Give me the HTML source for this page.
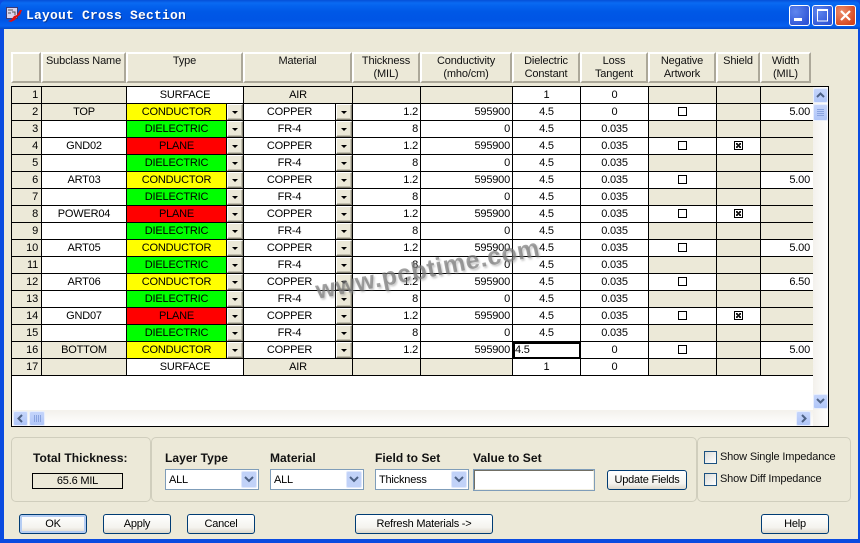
<!DOCTYPE html>
<html><head><meta charset="utf-8"><title>Layout Cross Section</title>
<style>
html,body{margin:0;padding:0;width:860px;height:543px;overflow:hidden;background:#0a4be0}
*{box-sizing:border-box}
body{font:11px/1 "Liberation Sans",sans-serif;color:#000;position:relative}
.a{position:absolute}
#tb{left:0;top:0;width:860px;height:29px;border-radius:7px 7px 0 0;background:linear-gradient(#0550d8 0,#0a6af2 3px,#0462ee 6px,#0058e6 12px,#0055e5 20px,#0560f0 26px,#0348c8 29px)}
#ttl{left:26px;top:9px;font:bold 13px/14px "Liberation Mono",monospace;color:#fff;letter-spacing:.2px;text-shadow:1px 1px 0 #0a3a9a;white-space:pre}
#win{left:4px;top:29px;width:854px;height:510px;background:#ece9d8}
.wb{top:5px;width:21px;height:21px;border:1px solid #fff;border-radius:3px;background:radial-gradient(circle at 30% 30%,#5f86ee,#2f55d6 80%)}
.wb.c{background:radial-gradient(circle at 30% 30%,#ec8d6c,#d5451d 80%)}
.h{top:52px;height:31px;background:#ece9d8;border:2px solid;border-color:#fff #aca899 #aca899 #fff;text-align:center;padding-top:1px;line-height:13px;color:#111;letter-spacing:-.15px}
#g{left:11px;top:86px;width:818px;height:341px;border:1px solid #000;background:#fff;overflow:hidden}
table{border-collapse:separate;border-spacing:0;table-layout:fixed;width:801px;position:absolute;left:0;top:0}
td{height:17px;padding:1px 0 0;border-right:1px solid #000;border-bottom:1px solid #000;text-align:center;font-size:11px;letter-spacing:-.2px;line-height:15px;overflow:hidden;white-space:nowrap;background:#fff}
td.b{background:#ece9d8}
td.n{background:#ece9d8;text-align:right;padding-right:3px}
td.r{text-align:right;padding-right:2px}
td.y{background:#ff0}td.v{background:#0f0}td.p{background:#f00}
td.d{background:#fff;padding:0}
td.l{border-right:0}
td.l.r{padding-right:3px}
td.d i{display:block;width:16px;height:16px;background:#ece9d8;border:1px solid;border-color:#fff #8a8778 #8a8778 #fff;box-shadow:inset -1px -1px 0 #c4c1b0;position:relative}
td.d i:after{content:"";position:absolute;left:4px;top:6px;border:3px solid transparent;border-top:3px solid #000;border-bottom:0}
.ck{display:inline-block;width:9px;height:9px;border:1px solid #000;vertical-align:-1px;background:#fff;position:relative}
.ck.x:after{content:"";position:absolute;left:1px;top:1px;width:5px;height:5px;background:#111;clip-path:polygon(0 0,30% 0,50% 30%,70% 0,100% 0,100% 30%,70% 50%,100% 70%,100% 100%,70% 100%,50% 70%,30% 100%,0 100%,0 70%,30% 50%,0 30%)}
.sb{background:linear-gradient(#c5d5fb,#b0c6f8);border:1px solid #e8eefc;border-radius:2px}
.grp{border:1px solid #d0cebd;border-radius:5px;top:437px;height:65px}
.lb{font-weight:bold;font-size:12px;letter-spacing:.05px;top:452px;line-height:13px;color:#111}
.cb{top:469px;height:21px;width:94px;border:1px solid #7f9db9;background:#fff;padding:4px 0 0 3px;font-size:11px;letter-spacing:-.2px;line-height:13px}
.cb b{position:absolute;right:1px;top:1px;width:16px;height:17px;background:#c1d2f8;border:1px solid #e0e8fc;border-radius:2px}
.btn{top:514px;height:20px;width:68px;border:1px solid #003c74;border-radius:3px;background:linear-gradient(#fff,#f4f3ee 70%,#dcd8cc);text-align:center;font-size:11px;letter-spacing:-.22px;line-height:18px}
.chk{left:704px;width:13px;height:13px;border:1px solid #1c5180;background:linear-gradient(135deg,#dcdcd7,#fff)}
.sl{left:720px;font-size:11px;letter-spacing:-.15px;line-height:14px;color:#111}
#wm{left:316px;top:278px;font:bold 25px/26px "Liberation Sans",sans-serif;letter-spacing:.6px;color:rgba(120,120,120,.68);text-shadow:1px 2px 2px rgba(150,150,150,.5);transform:rotate(-11deg);transform-origin:0 50%;white-space:nowrap}
</style></head>
<body>
<div class="a" id="tb"></div>
<svg class="a" style="left:6px;top:7px" width="17" height="17" viewBox="0 0 17 17"><rect x="0.5" y="0.5" width="11" height="11" fill="#d9d4ec" stroke="#3a3a78"/><path d="M2 3h5M2 6h3M6 5h3v3" stroke="#555" fill="none"/><path d="M2 14l3-1 3-4 3-1 3-5 2 0-2 5-3 2-2 3-4 2z" fill="#e01010"/></svg>
<div class="a" id="ttl">Layout Cross Section</div>
<div class="a wb" style="left:789px"><svg width="19" height="19" style="display:block"><rect x="4" y="12" width="8" height="3" fill="#fff"/></svg></div>
<div class="a wb" style="left:812px"><svg width="19" height="19" style="display:block"><path d="M4 4.5h11M4.500 4v11h10V4" stroke="#fff" stroke-width="1" fill="none"/><rect x="4" y="3" width="11" height="2" fill="#fff"/></svg></div>
<div class="a wb c" style="left:835px"><svg width="19" height="19" style="display:block"><path d="M5 5l9 9M14 5l-9 9" stroke="#fff" stroke-width="2.2"/></svg></div>
<div class="a" id="win"></div>

<div class="a h" style="left:11px;width:30px"></div>
<div class="a h" style="left:41px;width:85px">Subclass Name</div>
<div class="a h" style="left:126px;width:117px">Type</div>
<div class="a h" style="left:243px;width:109px">Material</div>
<div class="a h" style="left:352px;width:68px">Thickness<br>(MIL)</div>
<div class="a h" style="left:420px;width:92px">Conductivity<br>(mho/cm)</div>
<div class="a h" style="left:512px;width:68px">Dielectric<br>Constant</div>
<div class="a h" style="left:580px;width:68px">Loss<br>Tangent</div>
<div class="a h" style="left:648px;width:68px">Negative<br>Artwork</div>
<div class="a h" style="left:716px;width:44px">Shield</div>
<div class="a h" style="left:760px;width:51px">Width<br>(MIL)</div>

<div class="a" id="g">
<table>
<colgroup><col style="width:30px"><col style="width:85px"><col style="width:100px"><col style="width:17px"><col style="width:92px"><col style="width:17px"><col style="width:68px"><col style="width:92px"><col style="width:68px"><col style="width:68px"><col style="width:68px"><col style="width:44px"><col style="width:52px"></colgroup>
<tr><td class="n">1</td><td class="b"></td><td colspan="2">SURFACE</td><td class="b" colspan="2">AIR</td><td class="b"></td><td class="b"></td><td>1</td><td>0</td><td class="b"></td><td class="b"></td><td class="b l"></td></tr>
<tr><td class="n">2</td><td class="b">TOP</td><td class="y">CONDUCTOR</td><td class="d"><i></i></td><td>COPPER</td><td class="d"><i></i></td><td class="r">1.2</td><td class="r">595900</td><td>4.5</td><td>0</td><td><span class="ck"></span></td><td class="b"></td><td class="r l">5.00</td></tr>
<tr><td class="n">3</td><td></td><td class="v">DIELECTRIC</td><td class="d"><i></i></td><td>FR-4</td><td class="d"><i></i></td><td class="r">8</td><td class="r">0</td><td>4.5</td><td>0.035</td><td class="b"></td><td class="b"></td><td class="b l"></td></tr>
<tr><td class="n">4</td><td>GND02</td><td class="p">PLANE</td><td class="d"><i></i></td><td>COPPER</td><td class="d"><i></i></td><td class="r">1.2</td><td class="r">595900</td><td>4.5</td><td>0.035</td><td><span class="ck"></span></td><td><span class="ck x"></span></td><td class="b l"></td></tr>
<tr><td class="n">5</td><td></td><td class="v">DIELECTRIC</td><td class="d"><i></i></td><td>FR-4</td><td class="d"><i></i></td><td class="r">8</td><td class="r">0</td><td>4.5</td><td>0.035</td><td class="b"></td><td class="b"></td><td class="b l"></td></tr>
<tr><td class="n">6</td><td>ART03</td><td class="y">CONDUCTOR</td><td class="d"><i></i></td><td>COPPER</td><td class="d"><i></i></td><td class="r">1.2</td><td class="r">595900</td><td>4.5</td><td>0.035</td><td><span class="ck"></span></td><td class="b"></td><td class="r l">5.00</td></tr>
<tr><td class="n">7</td><td></td><td class="v">DIELECTRIC</td><td class="d"><i></i></td><td>FR-4</td><td class="d"><i></i></td><td class="r">8</td><td class="r">0</td><td>4.5</td><td>0.035</td><td class="b"></td><td class="b"></td><td class="b l"></td></tr>
<tr><td class="n">8</td><td>POWER04</td><td class="p">PLANE</td><td class="d"><i></i></td><td>COPPER</td><td class="d"><i></i></td><td class="r">1.2</td><td class="r">595900</td><td>4.5</td><td>0.035</td><td><span class="ck"></span></td><td><span class="ck x"></span></td><td class="b l"></td></tr>
<tr><td class="n">9</td><td></td><td class="v">DIELECTRIC</td><td class="d"><i></i></td><td>FR-4</td><td class="d"><i></i></td><td class="r">8</td><td class="r">0</td><td>4.5</td><td>0.035</td><td class="b"></td><td class="b"></td><td class="b l"></td></tr>
<tr><td class="n">10</td><td>ART05</td><td class="y">CONDUCTOR</td><td class="d"><i></i></td><td>COPPER</td><td class="d"><i></i></td><td class="r">1.2</td><td class="r">595900</td><td>4.5</td><td>0.035</td><td><span class="ck"></span></td><td class="b"></td><td class="r l">5.00</td></tr>
<tr><td class="n">11</td><td></td><td class="v">DIELECTRIC</td><td class="d"><i></i></td><td>FR-4</td><td class="d"><i></i></td><td class="r">8</td><td class="r">0</td><td>4.5</td><td>0.035</td><td class="b"></td><td class="b"></td><td class="b l"></td></tr>
<tr><td class="n">12</td><td>ART06</td><td class="y">CONDUCTOR</td><td class="d"><i></i></td><td>COPPER</td><td class="d"><i></i></td><td class="r">1.2</td><td class="r">595900</td><td>4.5</td><td>0.035</td><td><span class="ck"></span></td><td class="b"></td><td class="r l">6.50</td></tr>
<tr><td class="n">13</td><td></td><td class="v">DIELECTRIC</td><td class="d"><i></i></td><td>FR-4</td><td class="d"><i></i></td><td class="r">8</td><td class="r">0</td><td>4.5</td><td>0.035</td><td class="b"></td><td class="b"></td><td class="b l"></td></tr>
<tr><td class="n">14</td><td>GND07</td><td class="p">PLANE</td><td class="d"><i></i></td><td>COPPER</td><td class="d"><i></i></td><td class="r">1.2</td><td class="r">595900</td><td>4.5</td><td>0.035</td><td><span class="ck"></span></td><td><span class="ck x"></span></td><td class="b l"></td></tr>
<tr><td class="n">15</td><td></td><td class="v">DIELECTRIC</td><td class="d"><i></i></td><td>FR-4</td><td class="d"><i></i></td><td class="r">8</td><td class="r">0</td><td>4.5</td><td>0.035</td><td class="b"></td><td class="b"></td><td class="b l"></td></tr>
<tr><td class="n">16</td><td class="b">BOTTOM</td><td class="y">CONDUCTOR</td><td class="d"><i></i></td><td>COPPER</td><td class="d"><i></i></td><td class="r">1.2</td><td class="r">595900</td><td style="text-align:left;padding-left:2px;padding-top:0;outline:2px solid #000;outline-offset:-2px">4.5</td><td>0</td><td><span class="ck"></span></td><td class="b"></td><td class="r l">5.00</td></tr>
<tr><td class="n">17</td><td class="b"></td><td colspan="2">SURFACE</td><td class="b" colspan="2">AIR</td><td class="b"></td><td class="b"></td><td>1</td><td>0</td><td class="b"></td><td class="b"></td><td class="b l"></td></tr>
</table>
<div class="a" style="left:801px;top:0;width:16px;height:339px;background:linear-gradient(90deg,#f3f1ec,#fff)"></div>
<div class="a" style="left:0;top:323px;width:801px;height:16px;background:linear-gradient(#f3f1ec,#fff)"></div>
<div class="a sb" style="left:801px;top:1px;width:15px;height:15px"><svg width="13" height="13" style="display:block"><path d="M3 8l3.500-3.500L10 8" stroke="#4d6185" stroke-width="2" fill="none"/></svg></div>
<div class="a sb" style="left:801px;top:17px;width:15px;height:17px"><svg width="13" height="15" style="display:block"><path d="M3 4.500h7M3 6.500h7M3 8.500h7M3 10.500h7" stroke="#8aa4e0"/></svg></div>
<div class="a sb" style="left:801px;top:307px;width:15px;height:15px"><svg width="13" height="13" style="display:block"><path d="M3 4l3.500 3.500L10 4" stroke="#4d6185" stroke-width="2" fill="none"/></svg></div>
<div class="a sb" style="left:1px;top:324px;width:15px;height:15px"><svg width="13" height="13" style="display:block"><path d="M8 3L4.500 6.500 8 10" stroke="#4d6185" stroke-width="2" fill="none"/></svg></div>
<div class="a sb" style="left:17px;top:324px;width:16px;height:15px"><svg width="14" height="13" style="display:block"><path d="M4.500 3v7M6.500 3v7M8.500 3v7M10.500 3v7" stroke="#8aa4e0"/></svg></div>
<div class="a sb" style="left:784px;top:324px;width:15px;height:15px"><svg width="13" height="13" style="display:block"><path d="M5 3l3.500 3.500L5 10" stroke="#4d6185" stroke-width="2" fill="none"/></svg></div>
</div>
<div class="a" id="wm">www.pcbtime.com</div>

<div class="a grp" style="left:11px;width:140px"></div>
<div class="a grp" style="left:151px;width:546px"></div>
<div class="a grp" style="left:697px;width:154px"></div>

<div class="a lb" style="left:33px">Total Thickness:</div>
<div class="a" style="left:32px;top:473px;width:91px;height:16px;border:1px solid #000;text-align:center;font-size:11px;letter-spacing:-.2px;line-height:14px">65.6 MIL</div>

<div class="a lb" style="left:165px">Layer Type</div>
<div class="a lb" style="left:270px">Material</div>
<div class="a lb" style="left:375px">Field to Set</div>
<div class="a lb" style="left:473px">Value to Set</div>

<div class="a cb" style="left:165px">ALL<b><svg width="14" height="15" style="display:block"><path d="M3 5l4 4 4-4" stroke="#4d6185" stroke-width="2" fill="none"/></svg></b></div>
<div class="a cb" style="left:270px">ALL<b><svg width="14" height="15" style="display:block"><path d="M3 5l4 4 4-4" stroke="#4d6185" stroke-width="2" fill="none"/></svg></b></div>
<div class="a cb" style="left:375px">Thickness<b><svg width="14" height="15" style="display:block"><path d="M3 5l4 4 4-4" stroke="#4d6185" stroke-width="2" fill="none"/></svg></b></div>
<div class="a" style="left:473px;top:469px;width:122px;height:22px;border:1px solid #7f9db9;background:#fff"><div style="height:20px;border:1px solid;border-color:#716f64 #f1efe2 #f1efe2 #716f64"></div></div>
<div class="a btn" style="left:607px;top:470px;width:80px">Update Fields</div>

<div class="a chk" style="top:451px"></div><div class="a sl" style="top:450px">Show Single Impedance</div>
<div class="a chk" style="top:473px"></div><div class="a sl" style="top:472px">Show Diff Impedance</div>

<div class="a btn" style="left:19px;box-shadow:inset 0 0 0 2px #b5cdf3">OK</div>
<div class="a btn" style="left:103px">Apply</div>
<div class="a btn" style="left:187px">Cancel</div>
<div class="a btn" style="left:355px;width:138px">Refresh Materials -&gt;</div>
<div class="a btn" style="left:761px">Help</div>
</body></html>
